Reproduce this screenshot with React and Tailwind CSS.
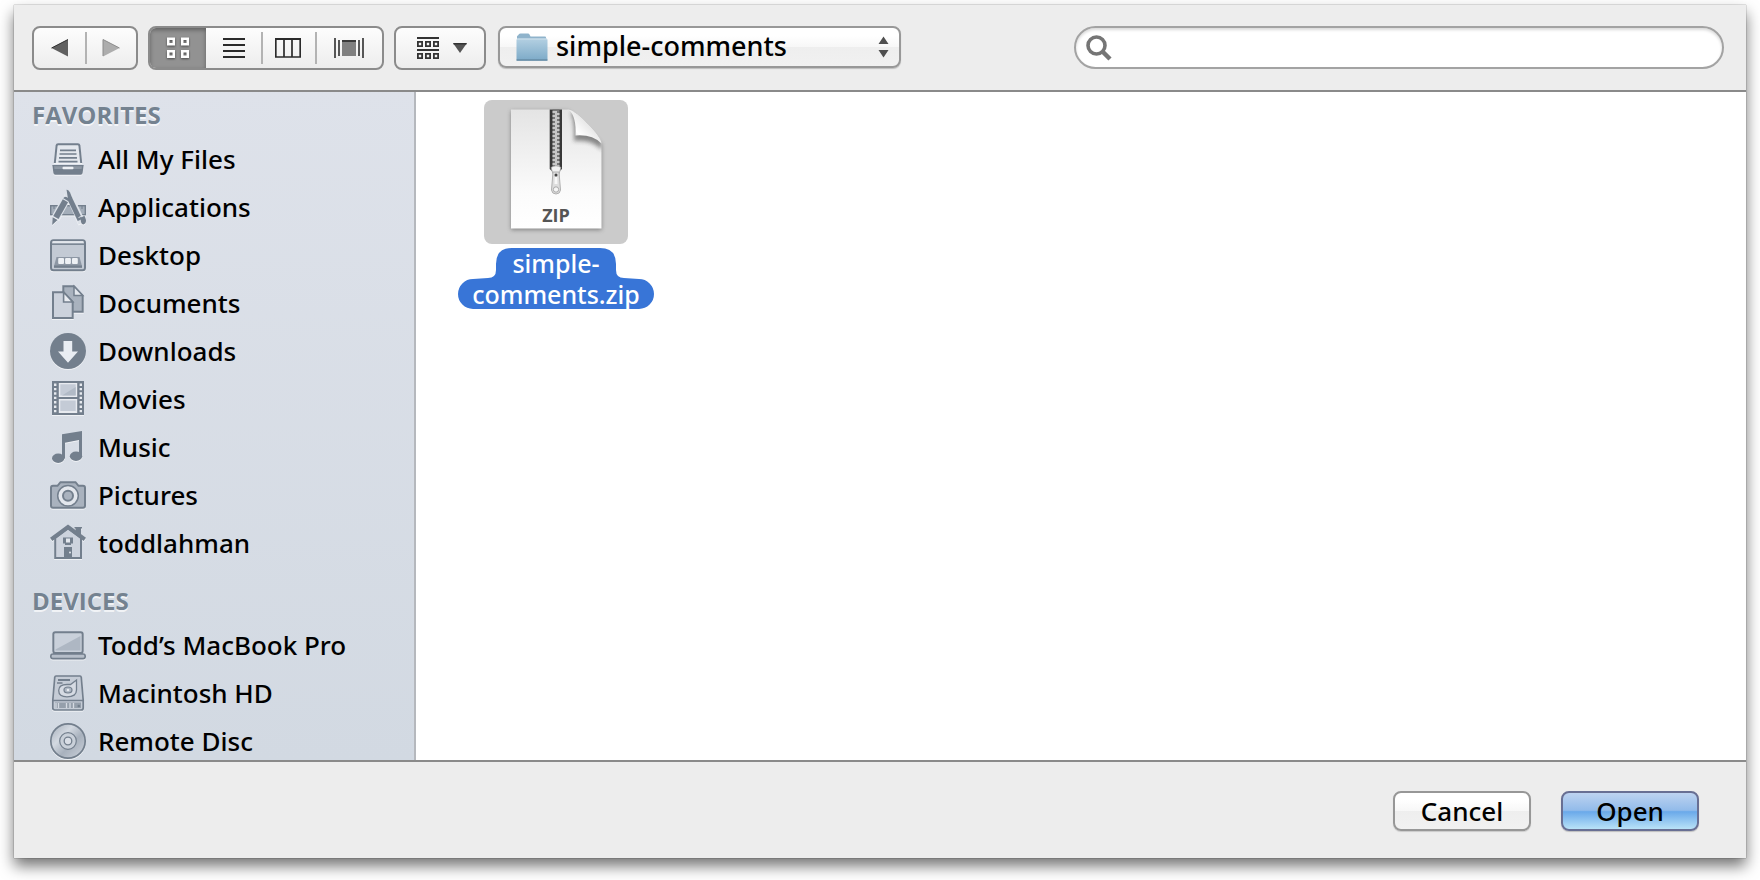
import { useState } from 'react';

// ========== Sidebar icons (36x36) ==========
const INK = '#737f8d';
const PALE = '#c3cad4';

function SideIcon({ children }) {
  return (
    <svg
      width="36"
      height="36"
      viewBox="0 0 36 36"
      fill="none"
      stroke={INK}
      strokeWidth="2"
      aria-hidden="true"
      className="shrink-0 overflow-visible drop-shadow-[0_1px_0_rgba(255,255,255,0.6)]"
    >
      {children}
    </svg>
  );
}

const AllFilesIcon = () => (
  <SideIcon>
    <path d="M4.800 22 6.600 4.500Q6.800 3.200 8.100 3.200H27.900Q29.200 3.200 29.400 4.500L31.200 22" fill="#e4e8ee" />
    <path d="M10 9.300H26M9.500 13H26.500M9 16.800H27M8.500 20.700H27.500" strokeWidth="1.700" />
    <path d="M2.300 24H33.700L32.600 32Q32.400 33.700 30.700 33.700H5.300Q3.600 33.700 3.400 32Z" fill={INK} stroke="none" />
    <path d="M4 25.200H32L31.600 28H4.400Z" fill="#8f99a5" stroke="none" />
    <rect x="12.500" y="25.800" width="11" height="2.400" rx="1" fill="#edf0f4" stroke="none" />
  </SideIcon>
);

const ApplicationsIcon = () => (
  <SideIcon>
    <rect x="0.700" y="16.700" width="34.600" height="9" fill="#a3adb9" strokeWidth="1.400" />
    <path d="M4 17v3M8 17v2M12 17v3M24 17v3M28 17v2M32 17v3" strokeWidth="1" />
    <path d="M16.500 9.500 5.500 29" stroke="#dde2e9" strokeWidth="8.500" />
    <path d="M17.500 3 32 34" stroke="#dde2e9" strokeWidth="7.500" />
    <path d="M19.500 9 30 31" strokeWidth="5" />
    <path d="M16.500 0.800Q18.500 0.400 20 3.500L22.200 9 18.200 11Z" fill={INK} stroke="none" />
    <path d="M30.600 28.800 34.500 26.800 36 31Q36.200 34.500 33.500 35.500 31.500 35.500 30.800 32Z" fill={INK} stroke="none" />
    <path d="M28.500 28.600 33 26.500" stroke="#dde2e9" strokeWidth="1" />
    <path d="M12.800 10.300 18 13.300 8.500 30 3.300 27Z" fill={INK} stroke="none" />
    <path d="M13.300 9.300Q14.500 6.900 17 8.200T18.500 12.200Z" fill={INK} stroke="none" />
    <path d="M2.700 28.200 7.500 31 2.200 36Z" fill={INK} stroke="none" />
  </SideIcon>
);

const DesktopIcon = () => (
  <SideIcon>
    <rect x="1" y="3.300" width="34" height="30" rx="2.500" fill={PALE} />
    <path d="M2.500 5H33.500" stroke="#eef1f5" strokeWidth="1.500" />
    <path d="M2 7.200H34" strokeWidth="1.400" />
    <path d="M6.500 20H29.500L32 29V31H4V29Z" fill="#8d97a4" stroke="none" />
    <path d="M4 29.500H32" strokeWidth="2" />
    <g fill="#edf0f4" stroke="none">
      <rect x="8.200" y="21" width="5.800" height="6" rx="1" />
      <rect x="15.100" y="21" width="5.800" height="6" rx="1" />
      <rect x="22" y="21" width="5.800" height="6" rx="1" />
    </g>
  </SideIcon>
);

const DocumentsIcon = () => (
  <SideIcon>
    <path d="M13.300 1.300H24L32.700 10.600V26.800H13.300Z" fill="#a9b2be" />
    <path d="M24 1.300V10.600H32.700Z" fill="#e3e7ed" strokeWidth="1.500" />
    <path d="M3 7.300H13.600L22.700 17V33H3Z" fill="#ccd2dc" />
    <path d="M13.600 7.300V17H22.700Z" fill="#e9ecf1" strokeWidth="1.600" />
  </SideIcon>
);

const DownloadsIcon = () => (
  <SideIcon>
    <circle cx="18" cy="18" r="18" fill={INK} stroke="none" />
    <path d="M13.500 8H22.200V18.500H28L18 29.700 8 18.500H13.500Z" fill="#e9edf3" stroke="none" />
  </SideIcon>
);

const MoviesIcon = () => (
  <SideIcon>
    <path d="M2 0H34V34H2Z" fill={INK} stroke="none" />
    <path d="M8.800 2H27.200V16H8.800ZM8.800 18H27.200V32H8.800Z" fill="#e8ebf0" stroke="none" />
    <path d="M10.300 3.300H25.700V14.600H10.300ZM10.300 19.400H25.700V30H10.300Z" fill="#c4cbd6" stroke="none" />
    <path d="M25.700 6V14.600H12Z" fill="#b1bac6" stroke="none" />
    <path d="M5.200 2.500V33M30.800 2.500V33" stroke="#e8ebf0" strokeWidth="2.400" strokeDasharray="2.400 2" />
  </SideIcon>
);

const MusicIcon = () => (
  <SideIcon>
    <g fill={INK} stroke="none">
      <path d="M12 5.300 32 2V27.500H29V11L15 13.700V29.500H12Z" />
      <ellipse cx="8.200" cy="29.300" rx="6.200" ry="4.700" />
      <ellipse cx="26" cy="27.300" rx="6.200" ry="4.700" />
    </g>
  </SideIcon>
);

const PicturesIcon = () => (
  <SideIcon>
    <path
      d="M3 8.800H7.500L10.500 5.200H25.500L28.500 8.800H33Q35 8.800 35 10.800V28.700Q35 30.700 33 30.700H3Q1 30.700 1 28.700V10.800Q1 8.800 3 8.800Z"
      fill="#a9b2be"
    />
    <circle cx="18" cy="18.800" r="10.300" fill="#e3e7ed" strokeWidth="1.500" />
    <circle cx="18" cy="18.800" r="5" fill="#a9b2be" strokeWidth="2" />
  </SideIcon>
);

const HomeIcon = () => (
  <SideIcon>
    <path d="M25.500 9V3.500H24.500V2H32V3.500H31V14Z" fill={INK} stroke="none" />
    <path d="M5.200 13 18 3.500 31 13V33H5.200Z" fill="#cdd3dd" />
    <path d="M1.200 14.300 18 2 34.800 14.300" strokeWidth="4" />
    <rect x="13" y="12.500" width="10" height="6" fill={INK} stroke="none" />
    <rect x="15" y="18" width="6" height="2" fill={INK} stroke="none" />
    <rect x="16" y="13.500" width="4" height="4" fill="#e3e7ed" stroke="none" />
    <path d="M14 22H22V33H14Z" fill={INK} stroke="none" />
    <circle cx="20" cy="27.500" r="1" fill="#e3e7ed" stroke="none" />
  </SideIcon>
);

const LaptopIcon = () => (
  <SideIcon>
    <rect x="3.300" y="5.300" width="29.400" height="20.700" rx="2" fill="#c9d0da" />
    <path d="M5.500 22.500 30.500 9V23.500H5.500Z" fill="#aeb7c3" stroke="none" />
    <rect x="0.800" y="27" width="34.400" height="4.600" rx="2.200" fill="#b7bfca" strokeWidth="1.600" />
    <path d="M3 26H33" strokeWidth="1.500" />
  </SideIcon>
);

const DriveIcon = () => (
  <SideIcon>
    <path
      d="M6 1H30Q31 1 31.300 2.500L33.200 25V33Q33.200 35 31.200 35H4.800Q2.800 35 2.800 33V25L4.700 2.500Q5 1 6 1Z"
      fill="#c5ccd6"
      strokeWidth="1.700"
    />
    <path d="M8 5H20" strokeWidth="2" />
    <path d="M7 8H12.500" strokeWidth="1.500" />
    <path d="M26.500 5V15Q26.500 21.800 17 21.800 8.700 21.800 8.700 15.500 8.700 9.500 17 9.500H20.500L26.500 5Z" fill="#d6dbe3" strokeWidth="1.300" />
    <ellipse cx="18" cy="15" rx="4" ry="3" fill="#aeb7c3" strokeWidth="1.200" />
    <circle cx="18" cy="15" r="1.300" fill="#e8ebf0" stroke="none" />
    <path d="M3 25.500H33" strokeWidth="1.500" />
    <path d="M5 27.500H31V33H5Z" fill="#959fab" stroke="none" />
    <path d="M6 28V33M8.500 28V33M16.500 28V33M20 28V33M23.500 28V33" stroke="#d5dae2" strokeWidth="1.300" />
    <circle cx="28.800" cy="31" r="1.300" fill={INK} stroke="none" />
  </SideIcon>
);

const DiscIcon = () => (
  <SideIcon>
    <defs>
      <linearGradient id="disc" x1="0" y1="0" x2="1" y2="1">
        <stop offset="0" stopColor="#a3acb8" />
        <stop offset="0.350" stopColor="#d3d9e1" />
        <stop offset="0.600" stopColor="#a8b1bd" />
        <stop offset="1" stopColor="#cdd3dc" />
      </linearGradient>
    </defs>
    <circle cx="18" cy="18" r="17.200" fill="url(#disc)" strokeWidth="1.700" />
    <circle cx="18" cy="18" r="8.300" fill="#c9d0d9" strokeWidth="1.200" />
    <circle cx="18" cy="18" r="3.800" fill="#d9dee6" strokeWidth="1.300" />
  </SideIcon>
);

const GROUPS = [
  {
    title: 'FAVORITES',
    items: [
      ['All My Files', AllFilesIcon],
      ['Applications', ApplicationsIcon],
      ['Desktop', DesktopIcon],
      ['Documents', DocumentsIcon],
      ['Downloads', DownloadsIcon],
      ['Movies', MoviesIcon],
      ['Music', MusicIcon],
      ['Pictures', PicturesIcon],
      ['toddlahman', HomeIcon],
    ],
  },
  {
    title: 'DEVICES',
    items: [
      ['Todd’s MacBook Pro', LaptopIcon],
      ['Macintosh HD', DriveIcon],
      ['Remote Disc', DiscIcon],
    ],
  },
];

// ========== Toolbar icons ==========
const GridIcon = () => (
  <svg width="24" height="22" viewBox="0 0 24 22" fill="none" stroke="#fff" strokeWidth="2.500" aria-hidden="true" className="drop-shadow-[0_1px_1px_rgba(0,0,0,0.5)]">
    <path d="M2.250 1.750h5.500v5.500h-5.500zM16.250 1.750h5.500v5.500h-5.500zM2.250 14.250h5.500v5.500h-5.500zM16.250 14.250h5.500v5.500h-5.500z" />
  </svg>
);

const ListIcon = () => (
  <svg width="22" height="20" viewBox="0 0 22 20" stroke="#2b2b2b" strokeWidth="2" aria-hidden="true">
    <path d="M0 1H22M0 7H22M0 13H22M0 19H22" />
  </svg>
);

const ColumnsIcon = () => (
  <svg width="26" height="20" viewBox="0 0 26 20" fill="none" stroke="#2b2b2b" aria-hidden="true">
    <path d="M0 1H26" strokeWidth="2" />
    <path d="M0.800 1V19H25.200V1M9 1V19M17 1V19" strokeWidth="1.700" />
  </svg>
);

const CoverFlowIcon = () => (
  <svg width="30" height="20" viewBox="0 0 30 20" stroke="#3a3a3a" aria-hidden="true">
    <path d="M1 0V20M5 2V18M25 2V18M29 0V20" strokeWidth="1.700" />
    <rect x="8" y="2" width="14" height="16" fill="#808080" stroke="none" />
    <path d="M8 3H22" strokeWidth="2" />
  </svg>
);

const ArrangeIcon = () => (
  <svg width="50" height="22" viewBox="0 0 50 22" fill="none" stroke="#333" aria-hidden="true">
    <path d="M0 1H22M0 13H22" strokeWidth="2" />
    <path
      d="M0.900 4.900h4.200v4.200h-4.200zM8.900 4.900h4.200v4.200h-4.200zM16.900 4.900h4.200v4.200h-4.200zM0.900 16.900h4.200v4.200h-4.200zM8.900 16.900h4.200v4.200h-4.200zM16.900 16.900h4.200v4.200h-4.200z"
      strokeWidth="1.800"
    />
    <path d="M36 6H50L43 16Z" fill="#555" stroke="none" />
    <path d="M36.500 6.700H49.500" strokeWidth="1.500" />
  </svg>
);

const BackIcon = () => (
  <svg width="18" height="18" viewBox="0 0 18 18" aria-hidden="true">
    <path d="M0.500 9 17 0.500V17.500Z" fill="#606060" />
    <path d="M0.500 9 17 0.500" stroke="#2e2e2e" />
  </svg>
);

const ForwardIcon = () => (
  <svg width="18" height="18" viewBox="0 0 18 18" aria-hidden="true">
    <path d="M17.500 9 1 0.500V17.500Z" fill="#adadad" />
    <path d="M17.500 9 1 0.500V17" fill="none" stroke="#8c8c8c" />
  </svg>
);

const FolderIcon = () => (
  <svg width="32" height="28" viewBox="0 0 32 28" aria-hidden="true">
    <defs>
      <linearGradient id="folder" x1="0" y1="0" x2="0" y2="1">
        <stop offset="0" stopColor="#b4d0e2" />
        <stop offset="1" stopColor="#7facc9" />
      </linearGradient>
    </defs>
    <path d="M1 26V3.500Q1 2.500 2 2.500L3 1Q3.500 0.500 4.500 0.500H12Q13 0.500 13.500 1.500L14.500 3.500H29Q30 3.500 30 4.500V26Z" fill="#8fb3cb" />
    <path d="M0.500 7Q0.500 5.500 2 5.500H30Q31.500 5.500 31.500 7V26.500H0.500Z" fill="url(#folder)" />
    <path d="M1 6H31" stroke="#d0e1ec" />
    <path d="M0.500 27H31.500" stroke="#527f9e" strokeWidth="1.500" />
  </svg>
);

const VIEWS = [
  ['Icon view', GridIcon, 'w-14'],
  ['List view', ListIcon, 'w-[55px]'],
  ['Column view', ColumnsIcon, 'w-[54px]'],
  ['Cover Flow view', CoverFlowIcon, 'w-[67px]'],
];

const GROUP_CLS =
  'flex h-11 items-stretch overflow-hidden rounded-lg border-2 border-[#8b8b8b] bg-linear-to-b from-[#fdfdfd] to-[#ededed]';

function Divider() {
  return <span className="-mr-0.5 h-8 w-0.5 self-center bg-[#b3b3b3]" />;
}

// ========== Toolbar ==========
function Toolbar() {
  const [view, setView] = useState('Icon view');

  return (
    <header className="flex h-[87px] shrink-0 items-start border-b-2 border-[#8a8a8a] pt-[21px] pr-[22px] pl-[18px]">
      <div className={GROUP_CLS}>
        <button aria-label="Back" className="flex w-[51px] items-center justify-center">
          <BackIcon />
        </button>
        <Divider />
        <button aria-label="Forward" className="flex w-[51px] items-center justify-center">
          <ForwardIcon />
        </button>
      </div>

      <div className={GROUP_CLS + ' ml-2.5'}>
        {VIEWS.map(([name, Icon, width], i) => (
          <div key={name} className="flex">
            {i > 1 && <Divider />}
            <button
              aria-label={name}
              aria-pressed={view === name}
              onClick={() => setView(name)}
              className={
                width +
                ' flex items-center justify-center aria-pressed:bg-[#929292] aria-pressed:shadow-[inset_0_2px_4px_rgba(0,0,0,0.35)]'
              }
            >
              <Icon />
            </button>
          </div>
        ))}
      </div>

      <div className={GROUP_CLS + ' ml-2.5'}>
        <button aria-label="Arrange by" className="flex w-[88px] items-center justify-center pl-1">
          <ArrangeIcon />
        </button>
      </div>

      <div className="relative ml-3 w-[403px]">
        <select
          aria-label="Folder"
          className="h-[42px] w-full appearance-none rounded-lg border-2 border-[#989898] bg-[linear-gradient(#ffffff_20%,#f7f7f7_50%,#eeeeee_50%,#f1f1f1)] pb-0.5 pl-14 text-[27px] leading-9 font-medium text-black shadow-[0_1px_1px_rgba(0,0,0,0.2)]"
        >
          <option>simple-comments</option>
        </select>
        <span className="pointer-events-none absolute inset-y-0 left-4.5 flex items-center">
          <FolderIcon />
        </span>
        <span className="pointer-events-none absolute inset-y-0 right-3 flex items-center">
          <svg width="11" height="22" viewBox="0 0 11 22" fill="#4f4f4f" aria-hidden="true">
            <path d="M0.500 8 5.500 0.500 10.500 8ZM0.500 14 5.500 21.500 10.500 14Z" />
          </svg>
        </span>
      </div>

      <div className="relative ml-auto w-[650px]">
        <input
          type="search"
          aria-label="Search"
          className="h-[43px] w-full rounded-full border-2 border-[#a3a3a3] bg-white pr-5 pl-11 text-[27px] shadow-[inset_0_2px_3px_rgba(0,0,0,0.15)] outline-none"
        />
        <span className="pointer-events-none absolute inset-y-0 left-3 flex items-center">
          <svg width="26" height="26" viewBox="0 0 26 26" fill="none" stroke="#757575" aria-hidden="true">
            <circle cx="10.500" cy="10.500" r="8.500" strokeWidth="3.600" />
            <path d="M16.500 16.500 24 24" strokeWidth="4.500" />
          </svg>
        </span>
      </div>
    </header>
  );
}

// ========== Sidebar ==========
function Sidebar() {
  return (
    <nav className="flex w-[402px] shrink-0 flex-col gap-[17px] overflow-hidden border-r-2 border-[#b5b8bd] bg-linear-to-b from-[#dee2ea] to-[#d2d9e2] pt-1.5">
      {GROUPS.map(({ title, items }) => (
        <section key={title}>
          <h2 className="pb-[3px] pl-4.5 font-['Open_Sans',sans-serif] text-[24px] leading-[34px] font-bold text-[#748290] [text-shadow:0_2px_0_rgba(255,255,255,0.7)]">
            {title}
          </h2>
          <ul>
            {items.map(([name, Icon]) => (
              <li key={name}>
                <a href="#" className="flex h-12 items-center gap-3 pl-9 text-[26px] font-medium text-black">
                  <Icon />
                  {name}
                </a>
              </li>
            ))}
          </ul>
        </section>
      ))}
    </nav>
  );
}

// ========== File ==========
// One tooth row every 4px down the tape
const TEETH = Array.from({ length: 14 }, (_, i) => 12 + i * 4);

function ZipIcon() {
  return (
    <svg width="144" height="144" viewBox="0 0 144 144" aria-hidden="true">
      <defs>
        <linearGradient id="page" x1="0" y1="0" x2="0" y2="1">
          <stop offset="0" stopColor="#e4e4e4" />
          <stop offset="0.700" stopColor="#fbfbfb" />
          <stop offset="1" stopColor="#ffffff" />
        </linearGradient>
        <linearGradient id="curl" x1="0.100" y1="0.900" x2="0.600" y2="0.400">
          <stop offset="0" stopColor="#d0d0d0" />
          <stop offset="0.400" stopColor="#ffffff" />
          <stop offset="1" stopColor="#e6e6e6" />
        </linearGradient>
        <filter id="soft" x="-30%" y="-30%" width="160%" height="160%">
          <feGaussianBlur stdDeviation="2" />
        </filter>
        <clipPath id="sheet">
          <path d="M27 9.500H84.500Q92 11 104 24 117 37 117.500 43.500V128.500H27Z" />
        </clipPath>
      </defs>
      <path d="M27 11H84.500L117.500 44V130H27Z" fill="#555" opacity="0.600" filter="url(#soft)" />
      <path d="M27 9.500H84.500Q92 11 104 24 117 37 117.500 43.500V128.500H27Z" fill="url(#page)" />
      <g clipPath="url(#sheet)">
        <path d="M87 14Q91 20 90 41 108 39 118 50V36L92 9Z" fill="#333" opacity="0.550" filter="url(#soft)" />
      </g>
      <path d="M84.500 9.500Q92.500 16 91.500 35.500 108 34 117.500 43.500 117 37 104 24 92 11 84.500 9.500Z" fill="url(#curl)" />

      <path d="M65.700 9.500H78V69L75 71.500H68.500L65.700 69Z" fill="#383838" />
      <rect x="68.500" y="9.500" width="7" height="58" fill="#777" />
      {TEETH.map(y => (
        <path key={y} d={`M68.500 ${y}h4.500M71 ${y + 2}h4.500`} stroke="#e2e2e2" strokeWidth="1.300" />
      ))}
      <path d="M67 67.500Q72 64 77 67.500L75 74H69Z" fill="#f2f2f2" stroke="#999" strokeWidth="0.800" />
      <path d="M69 72H75L76.500 90Q76 94 72 94T67.500 90Z" fill="#dedede" stroke="#b0b0b0" />
      <path d="M70.800 77H73.200L73.500 84H70.500Z" fill="#f8f8f8" />
      <circle cx="72" cy="75" r="1.500" fill="#444" />
      <circle cx="72" cy="89.500" r="2.700" fill="#f5f5f5" stroke="#aaa" />
      <text x="72" y="122" textAnchor="middle" fill="#555" className="font-['Open_Sans',sans-serif] text-[18px] font-bold">
        ZIP
      </text>
    </svg>
  );
}

function ZipFile() {
  return (
    <figure className="flex w-[196px] flex-col items-center gap-1">
      <div className="rounded-lg bg-[#cbcbcb]">
        <ZipIcon />
      </div>
      <figcaption className="relative w-full">
        <svg width="196" height="61" viewBox="0 0 196 61" aria-hidden="true" className="absolute inset-0">
          <path
            d="M54 0H142Q158 0 158 16V22Q158 30 166 30L181 31A15 15 0 0 1 181 61H15A15 15 0 0 1 15 31L30 30Q38 30 38 22V16Q38 0 54 0Z"
            fill="#3875d7"
          />
        </svg>
        <span className="relative block text-center text-[25px] leading-[31px] font-medium text-white">
          simple-
          <br />
          comments.zip
        </span>
      </figcaption>
    </figure>
  );
}

// ========== App ==========
const BUTTON_CLS = 'flex h-10 w-[138px] items-center justify-center rounded-lg border-2 text-[26px] leading-9 font-medium text-black';

export default function App() {
  return (
    <div className="h-screen bg-white px-3.5 pt-[5px] pb-[22px] font-['Noto_Sans','Open_Sans',sans-serif]">
      <div className="flex h-full flex-col bg-[#ededed] shadow-[0_0_1px_rgba(0,0,0,0.6),0_8px_14px_rgba(0,0,0,0.55)]">
        <Toolbar />

        <div className="flex min-h-0 flex-1">
          <Sidebar />
          <main className="flex-1 bg-white pt-2 pl-[42px]">
            <ZipFile />
          </main>
        </div>

        <footer className="flex h-[98px] shrink-0 items-center justify-end gap-[30px] border-t-2 border-[#8a8a8a] pt-0.5 pr-[47px]">
          <button
            className={
              BUTTON_CLS +
              ' border-[#979797] bg-[linear-gradient(#ffffff_20%,#f7f7f7_50%,#eeeeee_50%,#f1f1f1)] shadow-[0_1px_1px_rgba(0,0,0,0.15)]'
            }
          >
            Cancel
          </button>
          <button
            className={
              BUTTON_CLS +
              ' border-[#686f93] bg-[linear-gradient(#bdd3f0,#92bbea_48%,#6aa9ea_52%,#b9e2f7)] shadow-[0_1px_1px_rgba(0,0,0,0.2)]'
            }
          >
            Open
          </button>
        </footer>
      </div>
    </div>
  );
}
